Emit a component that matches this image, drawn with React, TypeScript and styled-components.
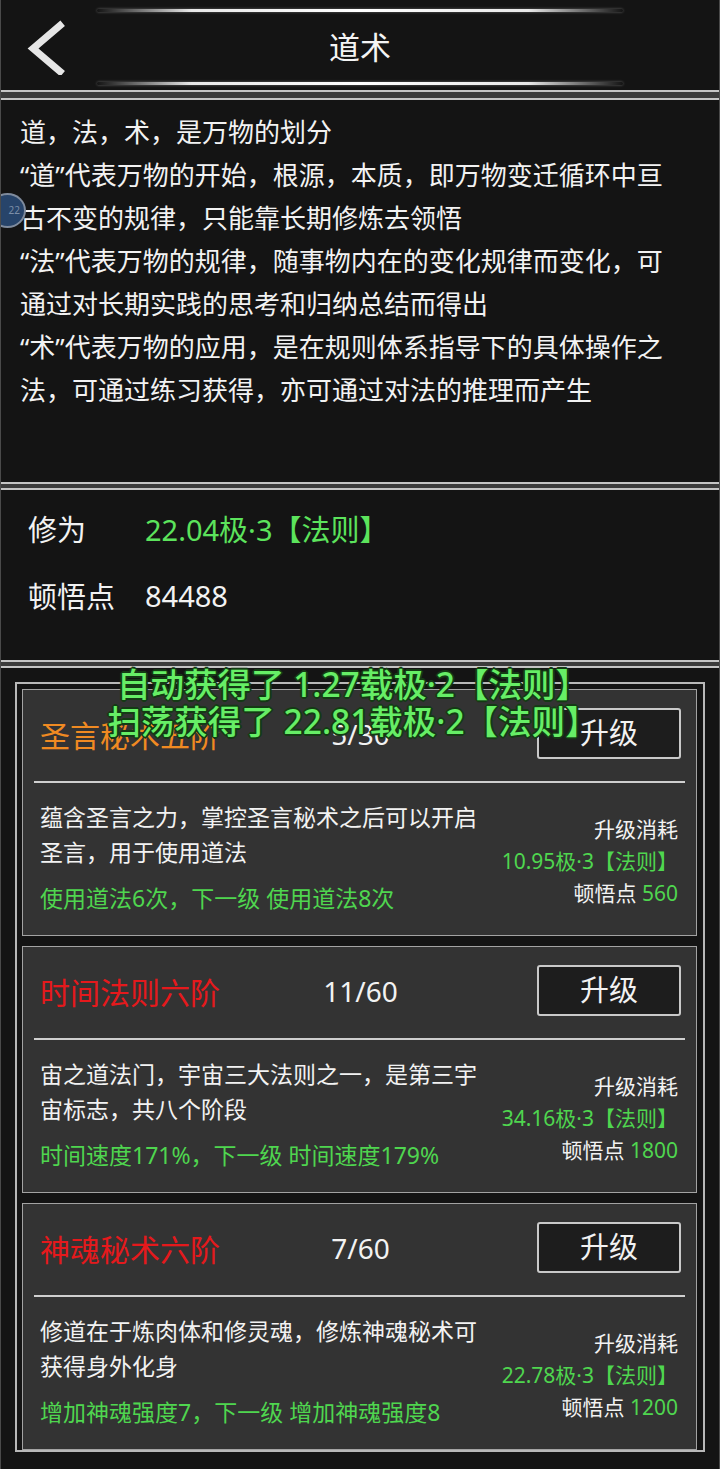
import React from "react";
import styled, { createGlobalStyle } from "styled-components";

const GlobalStyle = createGlobalStyle`
  html, body {
    margin: 0;
    padding: 0;
    background: #141414;
  }
  body {
    font-family: "Noto Sans", "Noto Sans CJK SC", sans-serif;
    color: #f0f0f0;
  }
`;

const introLines = [
  "道，法，术，是万物的划分",
  "“道”代表万物的开始，根源，本质，即万物变迁循环中亘",
  "古不变的规律，只能靠长期修炼去领悟",
  "“法”代表万物的规律，随事物内在的变化规律而变化，可",
  "通过对长期实践的思考和归纳总结而得出",
  "“术”代表万物的应用，是在规则体系指导下的具体操作之",
  "法，可通过练习获得，亦可通过对法的推理而产生",
];

type Skill = {
  title: string;
  color: string;
  count: string;
  desc: string;
  effect: string;
  cost: string;
  points: string;
};

const skills: Skill[] = [
  {
    title: "圣言秘术五阶",
    color: "#f08a22",
    count: "5/30",
    desc: "蕴含圣言之力，掌控圣言秘术之后可以开启圣言，用于使用道法",
    effect: "使用道法6次，下一级 使用道法8次",
    cost: "10.95极·3【法则】",
    points: "560",
  },
  {
    title: "时间法则六阶",
    color: "#e5191c",
    count: "11/60",
    desc: "宙之道法门，宇宙三大法则之一，是第三宇宙标志，共八个阶段",
    effect: "时间速度171%，下一级 时间速度179%",
    cost: "34.16极·3【法则】",
    points: "1800",
  },
  {
    title: "神魂秘术六阶",
    color: "#e5191c",
    count: "7/60",
    desc: "修道在于炼肉体和修灵魂，修炼神魂秘术可获得身外化身",
    effect: "增加神魂强度7，下一级 增加神魂强度8",
    cost: "22.78极·3【法则】",
    points: "1200",
  },
];

const App: React.FC = () => {
  return (
    <Page>
      <GlobalStyle />
      <Header>
        <GlowLine />
        <TitleRow>
          <BackButton>
            <svg width="40" height="56" viewBox="0 0 40 56">
              <path
                d="M34 6.5 L7 29.5 L34 52.5"
                fill="none"
                stroke="#e6e6e6"
                strokeWidth="7"
                strokeLinecap="square"
              />
            </svg>
          </BackButton>
          <Title>道术</Title>
          <span />
        </TitleRow>
        <GlowLine />
      </Header>
      <Separator $height={10} />
      <Intro>
        <Badge>22</Badge>
        {introLines.map((line) => (
          <IntroLine key={line}>{line}</IntroLine>
        ))}
      </Intro>
      <Separator $height={8} />
      <Stats>
        <StatRow>
          <StatLabel>修为</StatLabel>
          <StatValue $green>22.04极·3【法则】</StatValue>
        </StatRow>
        <StatRow>
          <StatLabel>顿悟点</StatLabel>
          <StatValue>84488</StatValue>
        </StatRow>
      </Stats>
      <Separator $height={8} />
      <CardsArea>
        <Toast>
          <ToastLine>自动获得了 1.27载极·2【法则】</ToastLine>
          <ToastLine>扫荡获得了 22.81载极·2【法则】</ToastLine>
        </Toast>
        <Frame>
          {skills.map((s) => (
            <Card key={s.title}>
              <CardHead>
                <SkillName $color={s.color}>{s.title}</SkillName>
                <Count>{s.count}</Count>
                <UpgradeButton>升级</UpgradeButton>
              </CardHead>
              <Divider />
              <CardBody>
                <Left>
                  <Desc>{s.desc}</Desc>
                  <Effect>{s.effect}</Effect>
                </Left>
                <Cost>
                  <CostLine>升级消耗</CostLine>
                  <CostLine $green>{s.cost}</CostLine>
                  <CostLine>
                    顿悟点 <Green>{s.points}</Green>
                  </CostLine>
                </Cost>
              </CardBody>
            </Card>
          ))}
        </Frame>
      </CardsArea>
    </Page>
  );
};

export default App;

const Page = styled.div`
  width: 720px;
  min-height: 1469px;
  box-sizing: border-box;
  border-left: 1px solid #4a4a4a;
  border-right: 1px solid #4a4a4a;
  background: #141414;
  display: flex;
  flex-direction: column;
  overflow: hidden;
`;

const Header = styled.div`
  height: 90px;
  box-sizing: border-box;
  padding-top: 9px;
  display: flex;
  flex-direction: column;
`;

const GlowLine = styled.div`
  height: 3px;
  margin: 0 96px;
  border-radius: 2px;
  background: linear-gradient(
    90deg,
    rgba(255, 255, 255, 0) 0%,
    rgba(255, 255, 255, 0.9) 18%,
    #ffffff 50%,
    rgba(255, 255, 255, 0.9) 82%,
    rgba(255, 255, 255, 0) 100%
  );
  box-shadow: 0 0 3px rgba(255, 255, 255, 0.35);
`;

const TitleRow = styled.div`
  height: 70px;
  display: grid;
  grid-template-columns: 1fr auto 1fr;
  align-items: center;
`;

const BackButton = styled.div`
  display: flex;
  align-items: center;
  padding-left: 25px;
`;

const Title = styled.div`
  font-size: 31px;
  line-height: 40px;
  color: #f4f4f4;
`;

const Separator = styled.div<{ $height: number }>`
  height: ${(p) => p.$height}px;
  box-sizing: border-box;
  border-top: 2px solid #c4c4c4;
  border-bottom: 2px solid #c4c4c4;
  background: #3b3b3b;
`;

const Intro = styled.div`
  position: relative;
  height: 382px;
  box-sizing: border-box;
  padding: 11px 20px 0 19px;
`;

const IntroLine = styled.div`
  font-size: 26px;
  line-height: 43px;
  white-space: nowrap;
  color: #f2f2f2;
`;

const Badge = styled.div`
  position: absolute;
  left: -12px;
  top: 93px;
  width: 29px;
  height: 31px;
  border-radius: 50%;
  background: #27446a;
  border: 2px solid rgba(150, 158, 170, 0.8);
  color: #7d8fa8;
  font-size: 10px;
  line-height: 31px;
  text-align: right;
  padding-right: 4px;
  box-sizing: content-box;
`;

const Stats = styled.div`
  height: 170px;
  box-sizing: border-box;
  padding: 18px 27px 0;
  display: flex;
  flex-direction: column;
  gap: 27px;
`;

const StatRow = styled.div`
  display: flex;
  align-items: center;
  height: 40px;
`;

const StatLabel = styled.div`
  width: 117px;
  font-size: 29px;
  color: #f2f2f2;
`;

const StatValue = styled.div<{ $green?: boolean }>`
  font-size: 29px;
  color: ${(p) => (p.$green ? "#5ce35c" : "#f2f2f2")};
`;

const CardsArea = styled.div`
  position: relative;
  flex: 1;
  padding: 14px 14px 0;
`;

const Toast = styled.div`
  position: absolute;
  left: 0;
  right: 0;
  top: -2px;
  z-index: 2;
  display: flex;
  flex-direction: column;
  align-items: center;
  pointer-events: none;
`;

const ToastLine = styled.div`
  font-size: 33.5px;
  line-height: 37px;
  font-weight: 500;
  color: #66ee66;
  white-space: nowrap;
  margin-left: -14px;
  text-shadow: 2px 0 0 #143a14, -2px 0 0 #143a14, 0 2px 0 #143a14,
    0 -2px 0 #143a14, 1px 1px 0 #143a14, -1px -1px 0 #143a14,
    1px -1px 0 #143a14, -1px 1px 0 #143a14;
`;

const Frame = styled.div`
  border: 2px solid #b8b8b8;
  padding: 5px 6px 0 5px;
  display: flex;
  flex-direction: column;
  gap: 10px;
`;

const Card = styled.div`
  background: #333333;
  border: 1px solid #a3a3a3;
  padding-bottom: 19px;
`;

const CardHead = styled.div`
  display: grid;
  grid-template-columns: 1fr auto 1fr;
  align-items: center;
  padding: 18px 15px 0 17px;
`;

const SkillName = styled.div<{ $color: string }>`
  font-size: 30px;
  color: ${(p) => p.$color};
  white-space: nowrap;
`;

const Count = styled.div`
  font-size: 28px;
  color: #f2f2f2;
`;

const UpgradeButton = styled.div`
  justify-self: end;
  width: 144px;
  height: 51px;
  box-sizing: border-box;
  border: 2px solid #c9c9c9;
  border-radius: 3px;
  background: #1d1d1d;
  font-size: 29px;
  line-height: 46px;
  text-align: center;
  color: #f2f2f2;
`;

const Divider = styled.div`
  height: 2px;
  background: #cfcfcf;
  margin: 22px 11px 0 11px;
`;

const CardBody = styled.div`
  display: flex;
  justify-content: space-between;
  align-items: flex-start;
  padding: 17px 18px 0 17px;
`;

const Left = styled.div`
  width: 448px;
`;

const Desc = styled.div`
  font-size: 23px;
  line-height: 35px;
  color: #f2f2f2;
`;

const Effect = styled.div`
  margin-top: 11px;
  font-size: 23px;
  line-height: 35px;
  color: #4fd64f;
  white-space: nowrap;
`;

const Cost = styled.div`
  margin-top: 13px;
  display: flex;
  flex-direction: column;
  align-items: flex-end;
`;

const CostLine = styled.div<{ $green?: boolean }>`
  font-size: 21px;
  line-height: 32px;
  white-space: nowrap;
  color: ${(p) => (p.$green ? "#4fd64f" : "#f2f2f2")};
`;

const Green = styled.span`
  color: #4fd64f;
`;
